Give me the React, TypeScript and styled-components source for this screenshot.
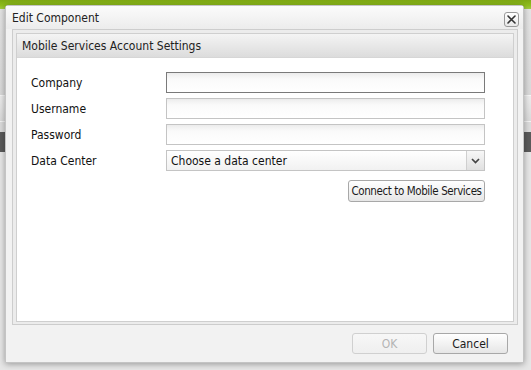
import React from 'react';
import styled, { createGlobalStyle } from 'styled-components';

const GlobalStyle = createGlobalStyle`
    html, body { margin: 0; padding: 0; }
    body {
        font-family: "DejaVu Sans Condensed", "DejaVu Sans", "Liberation Sans", sans-serif;
        font-size: 12px;
        color: #1a1a1a;
    }
`;

// --- BACKGROUND PAGE ---
const Page = styled.div`
    position: relative;
    width: 531px;
    height: 370px;
    overflow: hidden;
    display: flex;
    flex-direction: column;
    background: #dedede;
`;

const GreenBar = styled.div`
    height: 9px;
    flex-shrink: 0;
    background: linear-gradient(#7fa914, #8fbf1c 60%, #a4cc44);
`;

const Band = styled.div<{ $h: number; $bg: string; $line?: string }>`
    height: ${p => p.$h}px;
    flex-shrink: 0;
    background: ${p => p.$bg};
    border-top: ${p => (p.$line ? `1px solid ${p.$line}` : 'none')};
    box-sizing: border-box;
`;

// --- DIALOG ---
const Dialog = styled.div`
    position: absolute;
    left: 5px;
    top: 5px;
    width: 519px;
    height: 358px;
    box-sizing: border-box;
    display: flex;
    flex-direction: column;
    background: #f2f2f2;
    border: 1px solid #c4c4c4;
    border-radius: 3px 3px 0 0;
    box-shadow: 0 1px 6px rgba(0, 0, 0, 0.35);
`;

const TitleBar = styled.div`
    height: 23px;
    flex-shrink: 0;
    display: flex;
    align-items: center;
    justify-content: space-between;
    padding: 0 4px 0 6px;
    background: linear-gradient(#fbfbfb, #ececec);
    font-size: 12px;
    color: #222;
`;

const CloseButton = styled.button`
    width: 15px;
    height: 15px;
    padding: 0;
    display: flex;
    align-items: center;
    justify-content: center;
    border: 1px solid #9a9a9a;
    border-radius: 3px;
    background: linear-gradient(#ffffff, #e8e8e8);
    margin-top: 4px;
`;

const Body = styled.div`
    flex: 1;
    display: flex;
    padding: 0 5px 0 6px;
    min-height: 0;
`;

const Panel = styled.div`
    flex: 1;
    display: flex;
    border: 1px solid #cdcdcd;
    padding: 3px 3px 2px 3px;
    background: #ececec;
`;

const PanelInner = styled.div`
    flex: 1;
    display: flex;
    flex-direction: column;
    border: 1px solid #cfcfcf;
    background: #fff;
`;

const PanelHeader = styled.div`
    height: 23px;
    flex-shrink: 0;
    display: flex;
    align-items: center;
    padding-left: 5px;
    background: linear-gradient(#f4f4f4, #dcdcdc);
    border-bottom: 1px solid #d6d6d6;
    font-size: 12px;
    color: #222;
`;

const Form = styled.div`
    display: flex;
    flex-direction: column;
    padding: 14px 28px 0 14px;
`;

const Row = styled.div`
    display: flex;
    align-items: center;
    height: 21px;
    margin-bottom: 5px;
`;

const Label = styled.label`
    width: 135px;
    flex-shrink: 0;
    font-size: 12px;
    color: #111;
`;

const Input = styled.div<{ $focused?: boolean }>`
    flex: 1;
    height: 21px;
    box-sizing: border-box;
    border: 1px solid ${p => (p.$focused ? '#7a7a7a' : '#c4c4c4')};
    background: linear-gradient(#ececec, #fafafa 6px, #ffffff);
`;

const Select = styled.div`
    flex: 1;
    height: 21px;
    box-sizing: border-box;
    display: flex;
    align-items: center;
    border: 1px solid #c4c4c4;
    background: linear-gradient(#ffffff, #f1f1f1);
    font-size: 12px;
    color: #111;
`;

const SelectText = styled.span`
    flex: 1;
    padding-left: 4px;
`;

const SelectArrow = styled.span`
    width: 17px;
    height: 19px;
    display: flex;
    align-items: center;
    justify-content: center;
    border-left: 1px solid #cfcfcf;
    background: linear-gradient(#f7f7f7, #e0e0e0);
`;

const ActionRow = styled.div`
    display: flex;
    justify-content: flex-end;
    margin-top: 4px;
`;

const Button = styled.button<{ $disabled?: boolean }>`
    height: 21px;
    padding: 0 3px;
    font-family: inherit;
    font-size: 12px;
    color: ${p => (p.$disabled ? '#b4b4b4' : '#1a1a1a')};
    border: 1px solid ${p => (p.$disabled ? '#d0d0d0' : '#a8a8a8')};
    border-radius: 3px;
    background: ${p => (p.$disabled ? 'linear-gradient(#f7f7f7, #efefef)' : 'linear-gradient(#ffffff, #e6e6e6)')};
`;

const ConnectButton = styled(Button)`
    height: 22px;
    width: 137px;
    padding: 0;
    font-size: 11.5px;
    letter-spacing: -0.4px;
    white-space: nowrap;
`;

const FooterButton = styled(Button)`
    width: 75px;
`;

const Footer = styled.div`
    height: 37px;
    flex-shrink: 0;
    display: flex;
    align-items: flex-start;
    justify-content: flex-end;
    gap: 6px;
    padding: 8px 15px 0 0;
    box-sizing: border-box;
`;

const CloseIcon = () => (
    <svg width="11" height="11" viewBox="0 0 11 11">
        <path d="M2 2 L9 9 M9 2 L2 9" stroke="#333" strokeWidth="1.6" strokeLinecap="round" />
    </svg>
);

const ChevronIcon = () => (
    <svg width="9" height="6" viewBox="0 0 9 6">
        <path d="M1 1 L4.5 4.5 L8 1" stroke="#444" strokeWidth="1.7" fill="none" />
    </svg>
);

export default function App() {
    return (
        <>
            <GlobalStyle />
            <Page>
                <GreenBar />
                <Band $h={86} $bg="linear-gradient(#e4e4e4, #d9d9d9)" />
                <Band $h={26} $bg="linear-gradient(#ececec, #dadada)" $line="#f6f6f6" />
                <Band $h={11} $bg="#dcdcdc" $line="#f4f4f4" />
                <Band $h={20} $bg="#5b5b5b" />
                <Band $h={218} $bg="#e6e6e6" />

                <Dialog>
                    <TitleBar>
                        <span>Edit Component</span>
                        <CloseButton>
                            <CloseIcon />
                        </CloseButton>
                    </TitleBar>
                    <Body>
                        <Panel>
                            <PanelInner>
                                <PanelHeader>Mobile Services Account Settings</PanelHeader>
                                <Form>
                                    <Row>
                                        <Label>Company</Label>
                                        <Input $focused />
                                    </Row>
                                    <Row>
                                        <Label>Username</Label>
                                        <Input />
                                    </Row>
                                    <Row>
                                        <Label>Password</Label>
                                        <Input />
                                    </Row>
                                    <Row>
                                        <Label>Data Center</Label>
                                        <Select>
                                            <SelectText>Choose a data center</SelectText>
                                            <SelectArrow>
                                                <ChevronIcon />
                                            </SelectArrow>
                                        </Select>
                                    </Row>
                                    <ActionRow>
                                        <ConnectButton>Connect to Mobile Services</ConnectButton>
                                    </ActionRow>
                                </Form>
                            </PanelInner>
                        </Panel>
                    </Body>
                    <Footer>
                        <FooterButton $disabled>OK</FooterButton>
                        <FooterButton>Cancel</FooterButton>
                    </Footer>
                </Dialog>
            </Page>
        </>
    );
}
